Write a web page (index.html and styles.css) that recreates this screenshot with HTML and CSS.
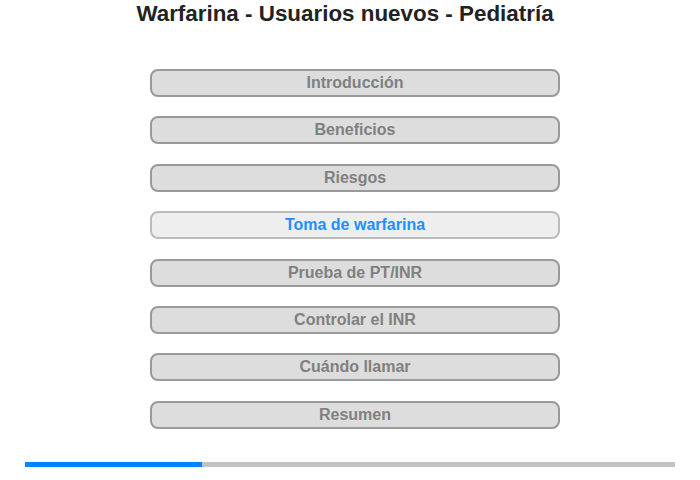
FILE: index.html
```html
<!DOCTYPE html>
<html lang="es">
<head>
    <meta charset="UTF-8">
    <title>Warfarina - Usuarios nuevos - Pediatría</title>
    <link rel="stylesheet" href="styles.css">
</head>
<body>
    <div class="page">
        <h1 class="title">Warfarina - Usuarios nuevos - Pediatría</h1>
        <nav class="menu">
            <a class="menu-item" href="#">Introducción</a>
            <a class="menu-item" href="#">Beneficios</a>
            <a class="menu-item" href="#">Riesgos</a>
            <a class="menu-item active" href="#">Toma de warfarina</a>
            <a class="menu-item" href="#">Prueba de PT/INR</a>
            <a class="menu-item" href="#">Controlar el INR</a>
            <a class="menu-item" href="#">Cuándo llamar</a>
            <a class="menu-item" href="#">Resumen</a>
        </nav>
        <div class="progress">
            <div class="progress-fill" style="width: 27.2%"></div>
        </div>
    </div>
</body>
</html>
```

FILE: styles.css
```css
*{
    padding: 0;margin: 0;
    box-sizing: border-box;
}
body{
    font-family: "Liberation Sans", Arial, sans-serif;
    background-color: white;
}
.page{
    width: 700px;
    height: 480px;
    padding-top: 1px;
}
.title{
    width: 690px;
    text-align: center;
    font-size: 22.4px;
    line-height: 26px;
    color: #222;
}
.menu{
    display: flex;
    flex-direction: column;
    gap: 19.4px;
    width: 410px;
    margin: 42px 0 0 150px;
}
.menu-item{
    display: block;
    height: 28px;
    line-height: 24px;
    text-align: center;
    font-size: 16px;
    font-weight: bold;
    color: #808080;
    text-decoration: none;
    background-color: #ddd;
    border: 2px solid #999;
    border-radius: 8px;
}
.menu-item.active{
    background-color: #eee;
    border-color: #bbb;
    color: #1e90ff;
}
.progress{
    width: 650px;
    height: 5px;
    margin: 33px 0 0 25px;
    background-color: #c3c3c3;
}
.progress-fill{
    height: 100%;
    background-color: #0084ff;
}
```
